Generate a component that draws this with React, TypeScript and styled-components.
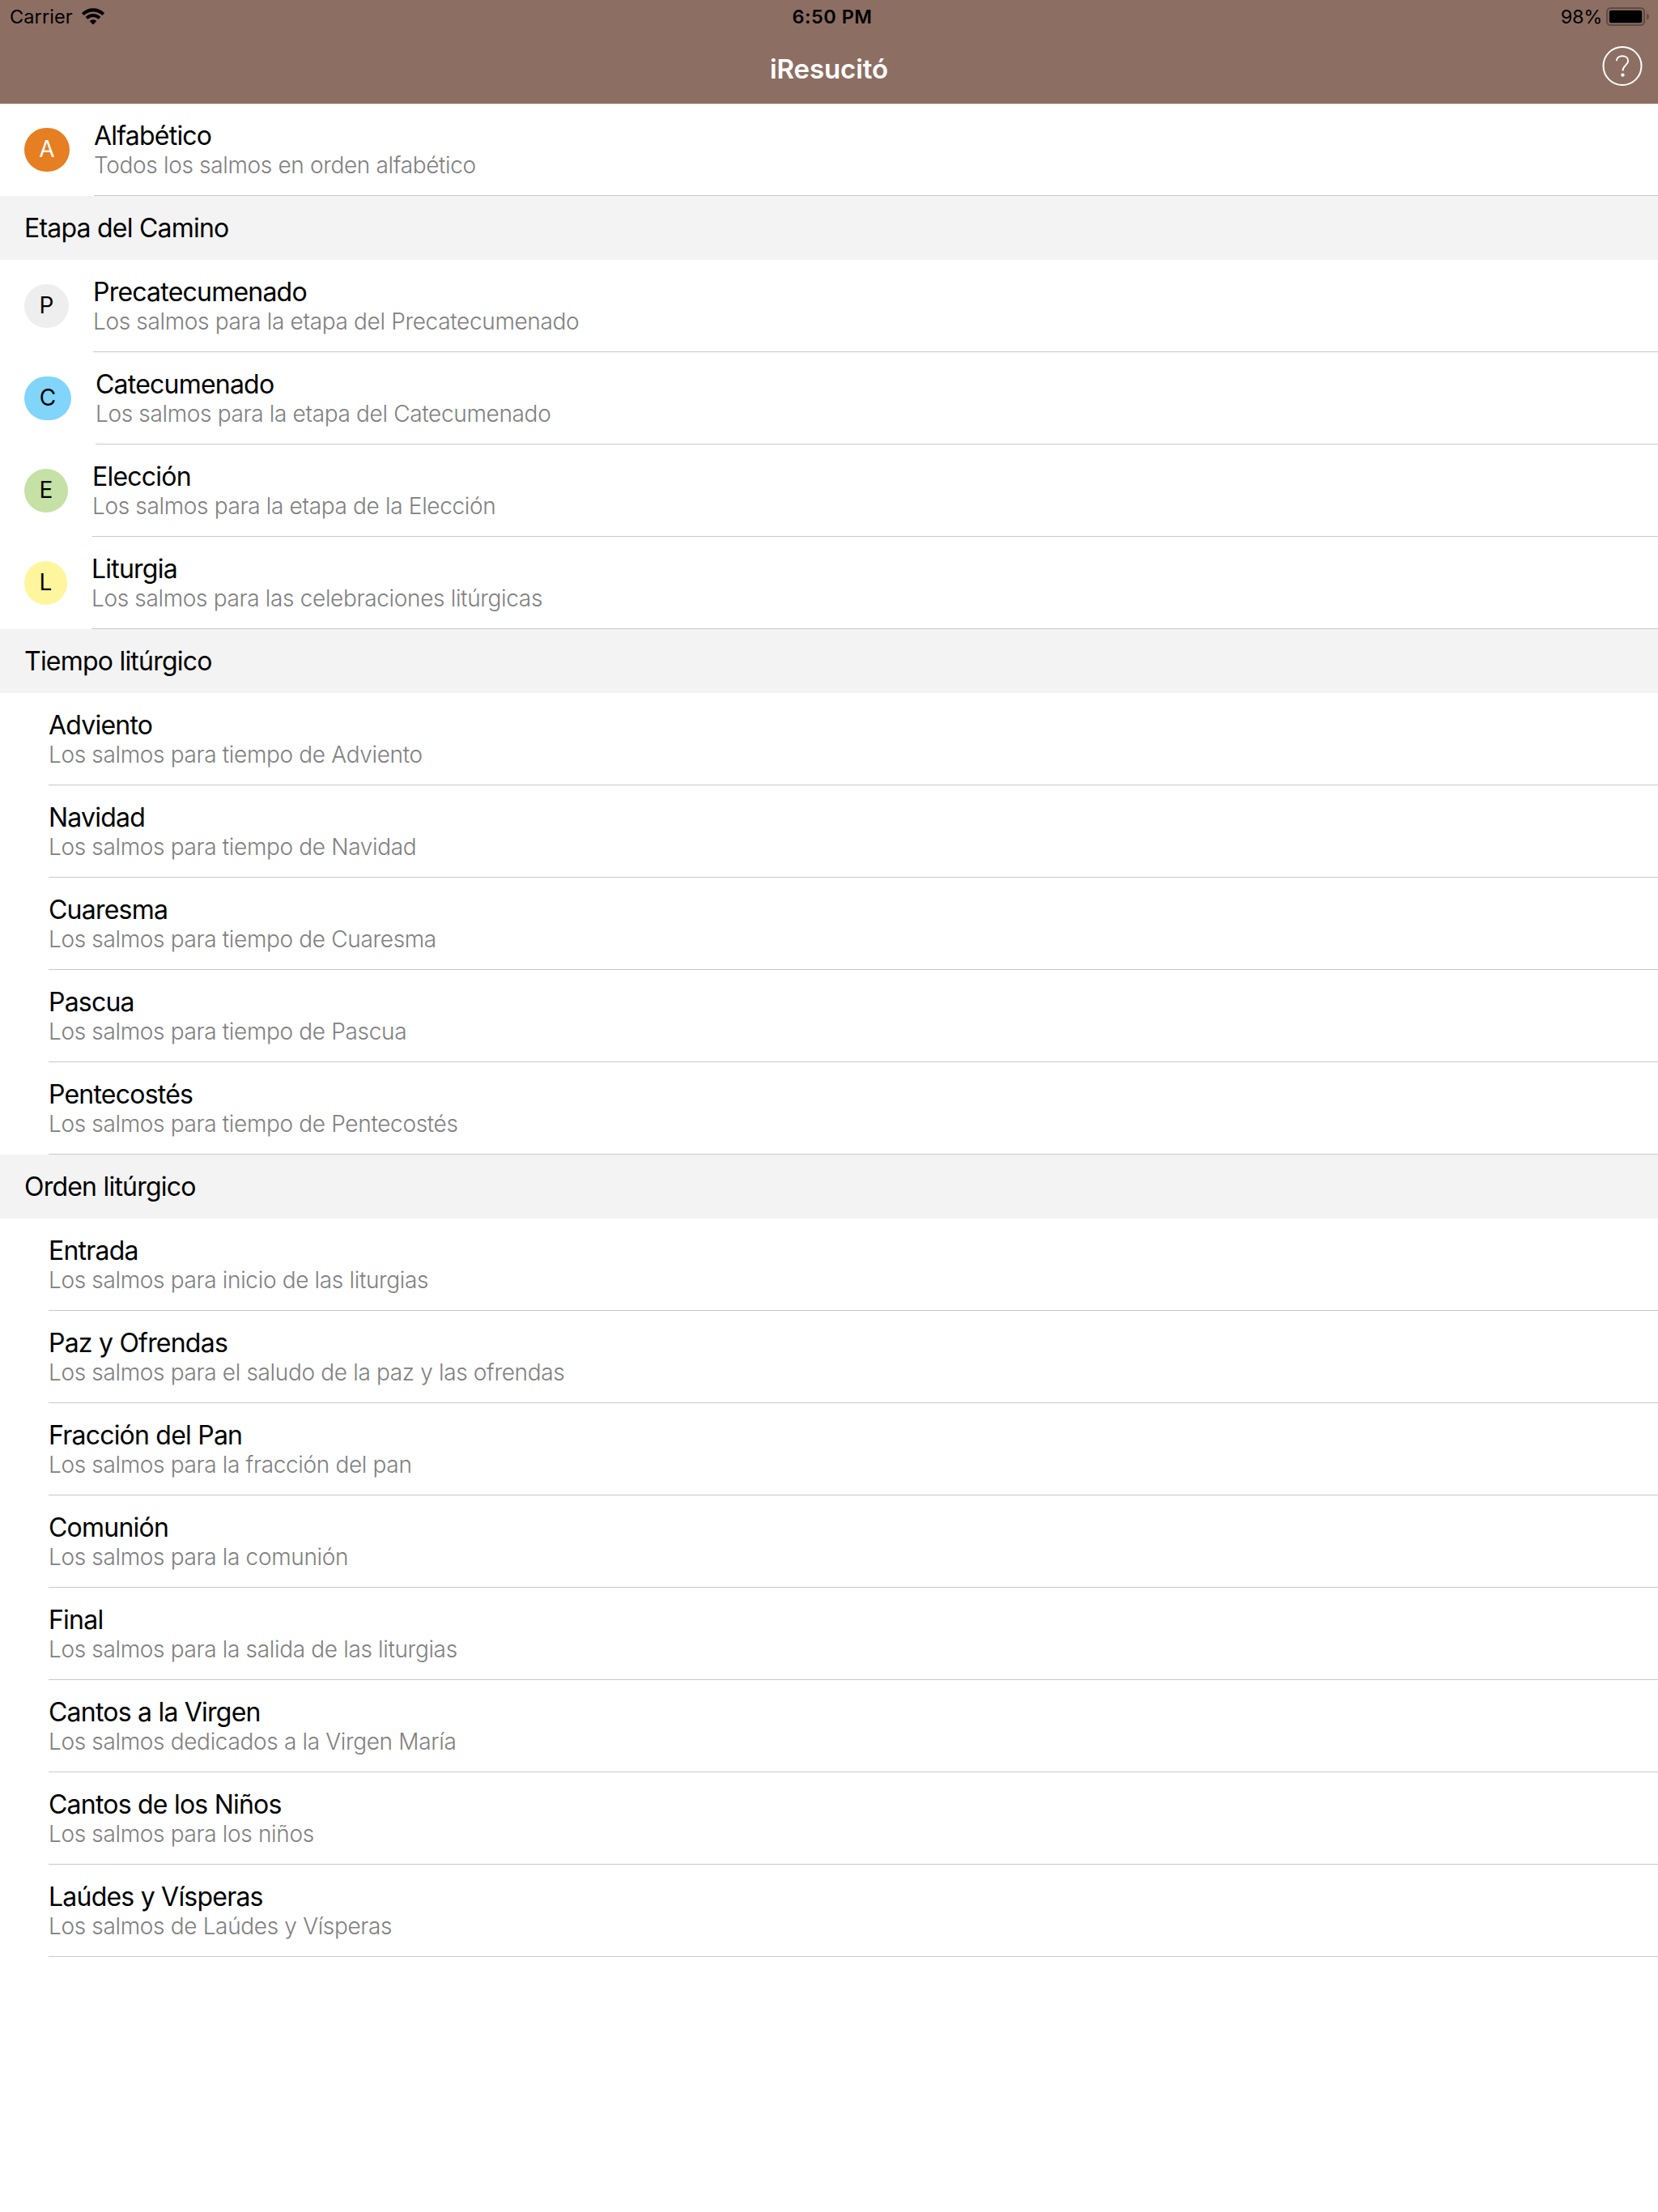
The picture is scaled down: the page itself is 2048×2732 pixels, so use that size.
import React from 'react';
import styled, { createGlobalStyle } from 'styled-components';

const GlobalStyle = createGlobalStyle`
  *, *::before, *::after {
    box-sizing: border-box;
  }
  body {
    margin: 0;
    background: #ffffff;
    color: #000000;
    font-family: Inter, Roboto, "Liberation Sans", sans-serif;
  }
`;

const Screen = styled.div`
  display: flex;
  flex-direction: column;
  width: 2048px;
  min-height: 2732px;
  background: #ffffff;
`;

const Header = styled.header`
  position: relative;
  display: flex;
  flex-direction: column;
  height: 128px;
  background: #8d6e63;
  box-shadow: 0 1px 0 #e9e5e4;
`;

const StatusBar = styled.div`
  display: grid;
  grid-template-columns: 1fr auto 1fr;
  align-items: center;
  height: 41px;
  padding: 0 11px 0 12px;
  font-size: 23.5px;
  line-height: 41px;
`;

const Carrier = styled.div`
  display: flex;
  align-items: center;
  gap: 11px;
  letter-spacing: 0.1px;
`;

const Clock = styled.time`
  padding-left: 7px;
  font-weight: 600;
  letter-spacing: 0.5px;
`;

const BatteryStatus = styled.div`
  display: flex;
  align-items: center;
  justify-content: flex-end;
  gap: 5px;
  letter-spacing: -0.3px;
`;

const NavBar = styled.div`
  display: grid;
  grid-template-columns: 1fr auto 1fr;
  align-items: start;
  flex: 1;
  padding: 0 19px;
`;

const NavTitle = styled.h1`
  grid-column: 2;
  margin: 0;
  padding-top: 23px;
  color: #ffffff;
  font-size: 33px;
  font-weight: 600;
  line-height: 42px;
  letter-spacing: -0.1px;
`;

const HelpButton = styled.button`
  justify-self: end;
  display: flex;
  margin: 15px 0 0;
  padding: 0;
  border: 0;
  background: none;
  color: #ffffff;
`;

const SectionHeader = styled.h2`
  margin: 0;
  height: 79px;
  padding: 0 30px;
  background: #f3f3f3;
  font-size: 32px;
  font-weight: 400;
  line-height: 79px;
  letter-spacing: -0.78px;
`;

const List = styled.ul`
  margin: 0;
  padding: 0;
  list-style: none;
`;

const Row = styled.li<{ $inset: number }>`
  display: flex;
  gap: 30px;
  height: 114px;
  padding-left: ${({ $inset }) => $inset}px;
`;

const Badge = styled.span<{ $width: number; $fill: string; $ink: string }>`
  display: flex;
  align-items: center;
  justify-content: center;
  flex: none;
  width: ${({ $width }) => $width}px;
  height: 54px;
  margin-top: 30px;
  padding-bottom: 2px;
  border-radius: 28px;
  background: ${({ $fill }) => $fill};
  color: ${({ $ink }) => $ink};
  font-size: 28px;
`;

const RowBody = styled.div`
  flex: 1;
  padding-top: 21px;
  border-bottom: 1px solid #c9c9c9;
`;

const RowTitle = styled.div`
  font-size: 32px;
  line-height: 38px;
  letter-spacing: -0.78px;
`;

const RowNote = styled.div`
  color: #808080;
  font-size: 28px;
  font-weight: 300;
  line-height: 34px;
  letter-spacing: -0.34px;
`;

type BadgeSpec = { letter: string; width: number; fill: string; ink?: string };
type Item = { title: string; note: string; badge?: BadgeSpec };
type Section = { heading?: string; items: Item[] };

const sections: Section[] = [
  {
    items: [
      {
        title: 'Alfabético',
        note: 'Todos los salmos en orden alfabético',
        badge: { letter: 'A', width: 56, fill: '#e67e22', ink: '#ffffff' },
      },
    ],
  },
  {
    heading: 'Etapa del Camino',
    items: [
      {
        title: 'Precatecumenado',
        note: 'Los salmos para la etapa del Precatecumenado',
        badge: { letter: 'P', width: 55, fill: '#eeeeee' },
      },
      {
        title: 'Catecumenado',
        note: 'Los salmos para la etapa del Catecumenado',
        badge: { letter: 'C', width: 58, fill: '#81d4fa' },
      },
      {
        title: 'Elección',
        note: 'Los salmos para la etapa de la Elección',
        badge: { letter: 'E', width: 54, fill: '#c5e1a5' },
      },
      {
        title: 'Liturgia',
        note: 'Los salmos para las celebraciones litúrgicas',
        badge: { letter: 'L', width: 53, fill: '#fff59d' },
      },
    ],
  },
  {
    heading: 'Tiempo litúrgico',
    items: [
      { title: 'Adviento', note: 'Los salmos para tiempo de Adviento' },
      { title: 'Navidad', note: 'Los salmos para tiempo de Navidad' },
      { title: 'Cuaresma', note: 'Los salmos para tiempo de Cuaresma' },
      { title: 'Pascua', note: 'Los salmos para tiempo de Pascua' },
      { title: 'Pentecostés', note: 'Los salmos para tiempo de Pentecostés' },
    ],
  },
  {
    heading: 'Orden litúrgico',
    items: [
      { title: 'Entrada', note: 'Los salmos para inicio de las liturgias' },
      { title: 'Paz y Ofrendas', note: 'Los salmos para el saludo de la paz y las ofrendas' },
      { title: 'Fracción del Pan', note: 'Los salmos para la fracción del pan' },
      { title: 'Comunión', note: 'Los salmos para la comunión' },
      { title: 'Final', note: 'Los salmos para la salida de las liturgias' },
      { title: 'Cantos a la Virgen', note: 'Los salmos dedicados a la Virgen María' },
      { title: 'Cantos de los Niños', note: 'Los salmos para los niños' },
      { title: 'Laúdes y Vísperas', note: 'Los salmos de Laúdes y Vísperas' },
    ],
  },
];

const WifiIcon = () => (
  <svg width="28" height="21" viewBox="0 0 28 21" fill="none" stroke="#000000">
    <path d="M1.3 7.6A18 18 0 0 1 26.7 7.6" strokeWidth="4.1" />
    <path d="M6 12.3A11.4 11.4 0 0 1 22 12.3" strokeWidth="3.9" />
    <path d="M9.7 16A6.1 6.1 0 0 1 18.3 16L14.8 19.8Q14 20.6 13.2 19.8Z" fill="#000000" stroke="none" />
  </svg>
);

const BatteryIcon = () => (
  <svg width="53" height="23" viewBox="0 0 53 23">
    <rect x="1" y="1" width="46" height="21" rx="4.5" fill="none" stroke="#5f4b43" strokeWidth="2" />
    <rect x="3.8" y="3.8" width="40.4" height="15.4" rx="2" fill="#000000" />
    <path d="M50 7.5C54 8.8 54 14.2 50 15.5Z" fill="#5f4b43" />
  </svg>
);

const HelpIcon = () => (
  <svg width="50" height="50" viewBox="0 0 50 50" fill="none" stroke="currentColor">
    <circle cx="25" cy="25.5" r="23.5" strokeWidth="2" />
    <path
      d="M17.8 19.2C17.8 15.4 20.9 13.2 25 13.2C29.2 13.2 32.1 15.6 32.1 19.2C32.1 24.6 25.4 24.8 25.4 31.6"
      strokeWidth="1.9"
    />
    <circle cx="25.4" cy="36.6" r="2.2" fill="currentColor" stroke="none" />
  </svg>
);

export default function App() {
  return (
    <Screen>
      <GlobalStyle />
      <Header>
        <StatusBar>
          <Carrier>
            Carrier
            <WifiIcon />
          </Carrier>
          <Clock>6:50 PM</Clock>
          <BatteryStatus>
            98%
            <BatteryIcon />
          </BatteryStatus>
        </StatusBar>
        <NavBar>
          <NavTitle>iResucitó</NavTitle>
          <HelpButton aria-label="Ayuda">
            <HelpIcon />
          </HelpButton>
        </NavBar>
      </Header>
      {sections.map(({ heading, items }) => (
        <section key={heading ?? 'inicio'}>
          {heading && <SectionHeader>{heading}</SectionHeader>}
          <List>
            {items.map(({ title, note, badge }) => (
              <Row key={title} $inset={badge ? 30 : 60}>
                {badge && (
                  <Badge $width={badge.width} $fill={badge.fill} $ink={badge.ink ?? '#000000'}>
                    {badge.letter}
                  </Badge>
                )}
                <RowBody>
                  <RowTitle>{title}</RowTitle>
                  <RowNote>{note}</RowNote>
                </RowBody>
              </Row>
            ))}
          </List>
        </section>
      ))}
    </Screen>
  );
}
